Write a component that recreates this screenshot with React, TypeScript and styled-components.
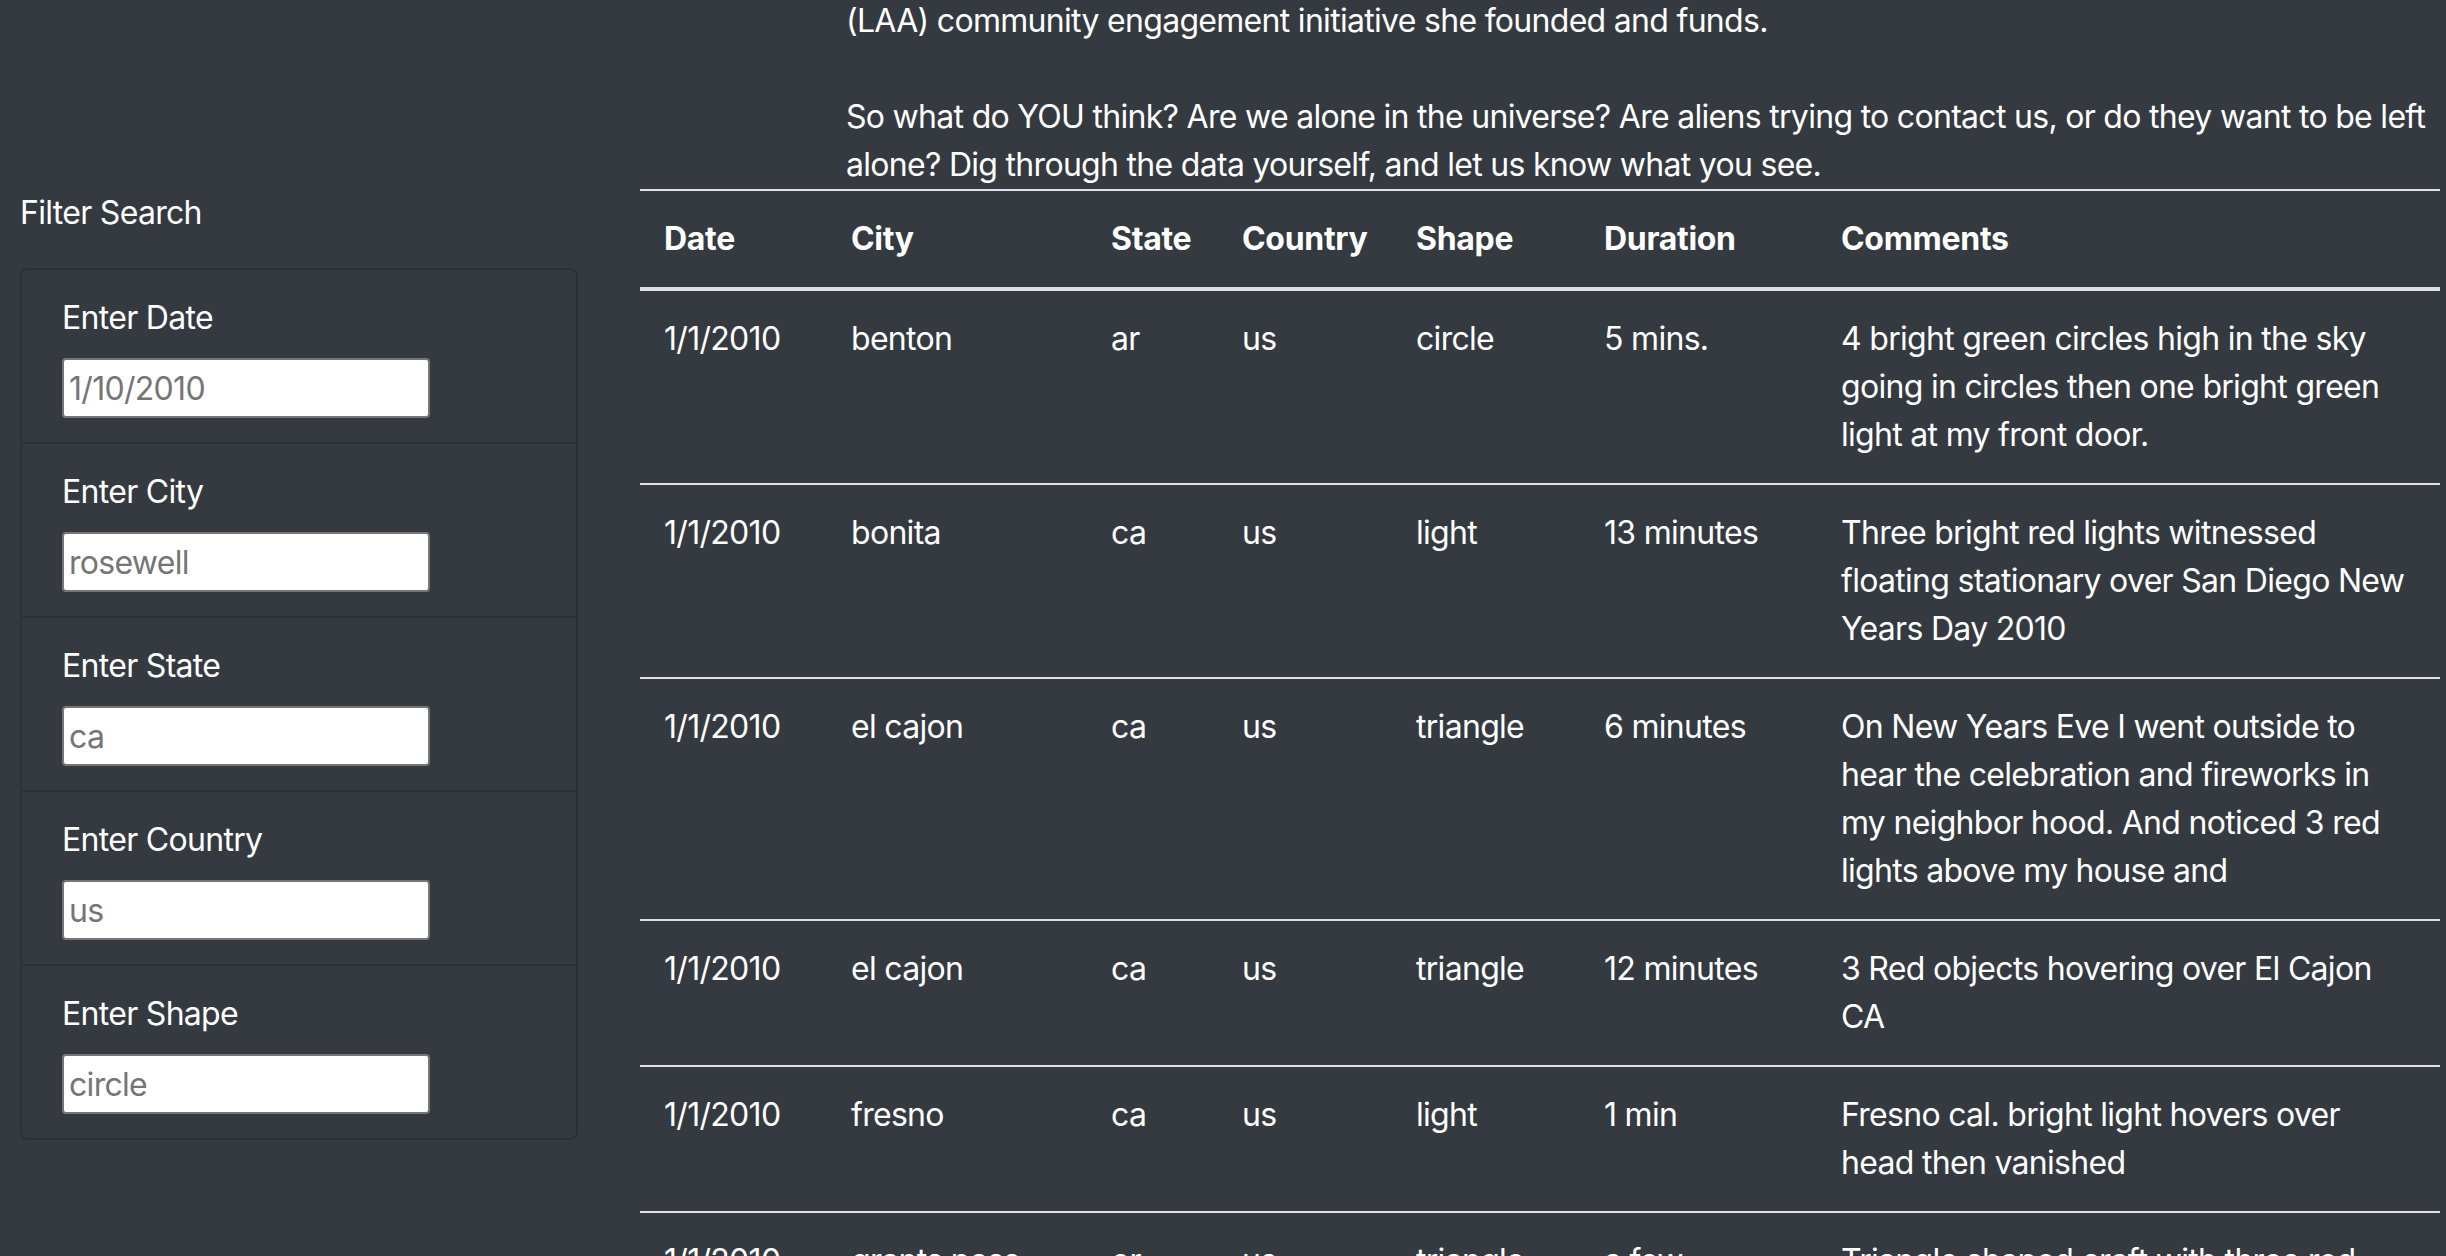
import styled, { createGlobalStyle } from 'styled-components';

const GlobalStyle = createGlobalStyle`
    html, body {
        margin: 0;
        padding: 0;
        background: #343a40;
    }
    body {
        color: #fff;
        font-family: Inter, 'Liberation Sans', Arial, sans-serif;
        font-size: 32px;
        line-height: 48px;
        letter-spacing: -0.7px;
        -webkit-font-smoothing: antialiased;
    }
    * {
        box-sizing: border-box;
    }
`;

const Page = styled.div`
    width: 2446px;
    overflow: hidden;
`;

const Intro = styled.p`
    margin: -3px 0 0 846px;
    width: 1594px;
`;

const Main = styled.div`
    display: flex;
    align-items: flex-start;
`;

const Sidebar = styled.aside`
    flex: 0 0 640px;
    padding-left: 20px;
`;

const SidebarTitle = styled.div`
    margin-bottom: 31px;
`;

const FilterCard = styled.ul`
    list-style: none;
    margin: 0;
    padding: 0;
    width: 558px;
    border: 2px solid #2c3136;
    border-radius: 8px;
`;

const FilterItem = styled.li`
    padding: 24px 40px;
    & + & {
        border-top: 2px solid #2c3136;
    }
`;

const FilterLabel = styled.label`
    display: block;
    margin-bottom: 16px;
`;

const FilterInput = styled.input`
    display: block;
    width: 368px;
    height: 60px;
    padding: 0 5px;
    border: 2px solid #767676;
    border-radius: 4px;
    background: #fff;
    font-family: Inter, 'Liberation Sans', Arial, sans-serif;
    font-size: 32px;
    letter-spacing: -0.7px;
    color: #222;
    &::placeholder {
        color: #757575;
    }
`;

const TableWrap = styled.section`
    flex: 0 0 1800px;
`;

const Table = styled.table`
    width: 1800px;
    table-layout: fixed;
    border-collapse: collapse;
    color: #fff;
`;

const Th = styled.th`
    padding: 24px;
    text-align: left;
    vertical-align: bottom;
    font-weight: 700;
    letter-spacing: -0.3px;
    border-top: 2px solid #dee2e6;
    border-bottom: 4px solid #dee2e6;
`;

const Td = styled.td`
    padding: 24px;
    vertical-align: top;
    border-top: 2px solid #dee2e6;
`;

const columns = [
    { key: 'date', label: 'Date', width: 187 },
    { key: 'city', label: 'City', width: 260 },
    { key: 'state', label: 'State', width: 131 },
    { key: 'country', label: 'Country', width: 174 },
    { key: 'shape', label: 'Shape', width: 188 },
    { key: 'duration', label: 'Duration', width: 237 },
    { key: 'comments', label: 'Comments', width: 623 },
] as const;

type Sighting = Record<(typeof columns)[number]['key'], string>;

const sightings: Sighting[] = [
    {
        date: '1/1/2010',
        city: 'benton',
        state: 'ar',
        country: 'us',
        shape: 'circle',
        duration: '5 mins.',
        comments:
            '4 bright green circles high in the sky going in circles then one bright green light at my front door.',
    },
    {
        date: '1/1/2010',
        city: 'bonita',
        state: 'ca',
        country: 'us',
        shape: 'light',
        duration: '13 minutes',
        comments:
            'Three bright red lights witnessed floating stationary over San Diego New Years Day 2010',
    },
    {
        date: '1/1/2010',
        city: 'el cajon',
        state: 'ca',
        country: 'us',
        shape: 'triangle',
        duration: '6 minutes',
        comments:
            'On New Years Eve I went outside to hear the celebration and fireworks in my neighbor hood. And noticed 3 red lights above my house and',
    },
    {
        date: '1/1/2010',
        city: 'el cajon',
        state: 'ca',
        country: 'us',
        shape: 'triangle',
        duration: '12 minutes',
        comments: '3 Red objects hovering over El Cajon CA',
    },
    {
        date: '1/1/2010',
        city: 'fresno',
        state: 'ca',
        country: 'us',
        shape: 'light',
        duration: '1 min',
        comments: 'Fresno cal. bright light hovers over head then vanished',
    },
    {
        date: '1/1/2010',
        city: 'grants pass',
        state: 'or',
        country: 'us',
        shape: 'triangle',
        duration: 'a few minutes',
        comments:
            'Triangle shaped craft with three red lights moving slowly over the hills',
    },
];

const filters = [
    { id: 'datetime', label: 'Enter Date', placeholder: '1/10/2010' },
    { id: 'city', label: 'Enter City', placeholder: 'rosewell' },
    { id: 'state', label: 'Enter State', placeholder: 'ca' },
    { id: 'country', label: 'Enter Country', placeholder: 'us' },
    { id: 'shape', label: 'Enter Shape', placeholder: 'circle' },
];

const App = () => {
    return (
        <Page>
            <GlobalStyle />
            <Intro>
                (LAA) community engagement initiative she founded and funds.
                <br />
                <br />
                So what do YOU think? Are we alone in the universe? Are aliens
                trying to contact us, or do they want to be left alone? Dig
                through the data yourself, and let us know what you see.
            </Intro>
            <Main>
                <Sidebar>
                    <SidebarTitle>Filter Search</SidebarTitle>
                    <FilterCard>
                        {filters.map((f) => (
                            <FilterItem key={f.id}>
                                <FilterLabel htmlFor={f.id}>{f.label}</FilterLabel>
                                <FilterInput id={f.id} type="text" placeholder={f.placeholder} />
                            </FilterItem>
                        ))}
                    </FilterCard>
                </Sidebar>
                <TableWrap>
                    <Table>
                        <colgroup>
                            {columns.map((c) => (
                                <col key={c.key} style={{ width: c.width }} />
                            ))}
                        </colgroup>
                        <thead>
                            <tr>
                                {columns.map((c) => (
                                    <Th key={c.key}>{c.label}</Th>
                                ))}
                            </tr>
                        </thead>
                        <tbody>
                            {sightings.map((row, i) => (
                                <tr key={i}>
                                    {columns.map((c) => (
                                        <Td key={c.key}>{row[c.key]}</Td>
                                    ))}
                                </tr>
                            ))}
                        </tbody>
                    </Table>
                </TableWrap>
            </Main>
        </Page>
    );
};

export default App;
